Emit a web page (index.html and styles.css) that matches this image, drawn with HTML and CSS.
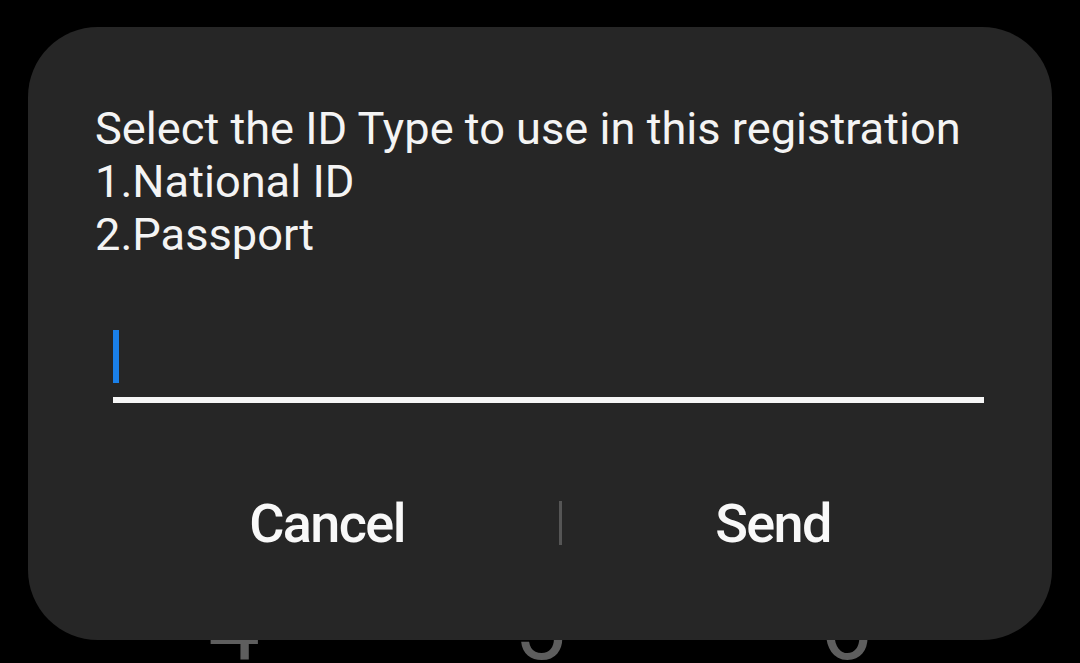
FILE: index.html
```html
<!DOCTYPE html>
<html lang="en">
<head>
  <meta charset="UTF-8" />
  <meta name="viewport" content="width=device-width, initial-scale=1.0"/>
  <title>USSD</title>
  <link rel="stylesheet" href="styles.css">
</head>
<body>
  <div class="screen">
    <div class="keypad">
      <span class="key">4</span>
      <span class="key">5</span>
      <span class="key">6</span>
    </div>

    <div class="dialog">
      <div class="message">
        Select the ID Type to use in this registration<br>
        1.National ID<br>
        2.Passport
      </div>

      <div class="field">
        <span class="cursor"></span>
        <div class="underline"></div>
      </div>

      <div class="actions">
        <button class="action">Cancel</button>
        <span class="divider"></span>
        <button class="action">Send</button>
      </div>
    </div>
  </div>
</body>
</html>
```

FILE: styles.css
```css
html, body {
  margin: 0;
  padding: 0;
  background: #000;
}
body {
  font-family: Roboto, 'Noto Sans', sans-serif;
  color: #f4f4f4;
}
.screen {
  position: relative;
  width: 1080px;
  height: 663px;
  overflow: hidden;
}
.keypad {
  display: grid;
  grid-template-columns: repeat(3, 306px);
  padding: 576px 0 0 81px;
}
.key {
  text-align: center;
  font-size: 92px;
  line-height: 104px;
  color: #5e5e5e;
}
.dialog {
  position: absolute;
  left: 28px;
  top: 27px;
  width: 1024px;
  height: 613px;
  box-sizing: border-box;
  padding: 75px 68px 0 67px;
  background: #262626;
  border-radius: 70px;
  display: flex;
  flex-direction: column;
}
.message {
  font-size: 45.2px;
  line-height: 53px;
}
.field {
  margin: 69px 0 0 18px;
}
.cursor {
  display: block;
  width: 6px;
  height: 53px;
  background: #1a80ea;
}
.underline {
  margin-top: 14px;
  height: 6px;
  background: #f6f6f6;
}
.actions {
  display: grid;
  grid-template-columns: 464px 3px 1fr;
  align-items: center;
  margin-top: 70px;
  height: 100px;
}
.action {
  background: none;
  border: none;
  padding: 0;
  font-family: Roboto, sans-serif;
  font-size: 54px;
  font-weight: 500;
  letter-spacing: -1.6px;
  color: #f8f8f8;
  cursor: pointer;
}
.divider {
  height: 44px;
  background: #555;
}
```
